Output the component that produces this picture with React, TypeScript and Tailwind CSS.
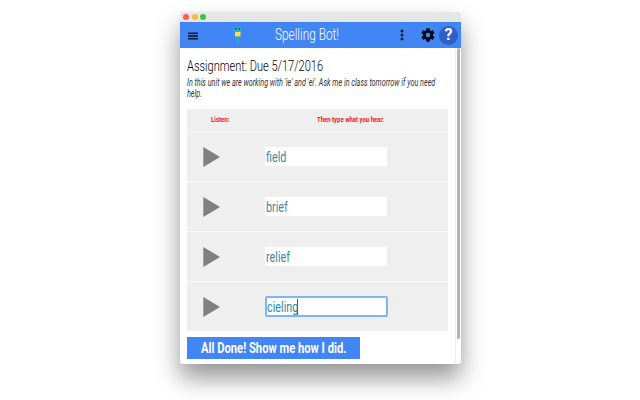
import React from "react";

const words = ["field", "brief", "relief", "cieling"];

function Row({ word, focus }: { word: string; focus?: boolean }) {
  return (
    <div className="flex h-[50px] items-center border-t border-[#f8f8f8]">
      <div className="flex w-[78px] shrink-0 pl-[16px]">
        <svg width="17" height="20" viewBox="0 0 17 20">
          <polygon points="0.3,0 17,10 0.3,20" fill="#808080" />
        </svg>
      </div>
      {focus ? (
        <div className="flex h-[21px] w-[123px] items-center rounded-[2px] border-2 border-[#7fb5f5] bg-white pt-[1px] text-[15px] text-[#2b8ba5]">
          <span className="inline-block origin-left scale-x-[0.72] leading-[17px]">{word}</span>
          <span className="ml-[-13px] h-[16px] w-px bg-[#555]" />
        </div>
      ) : (
        <div className="flex h-[19px] w-[122px] items-center bg-white pl-[1px] pt-[1px] text-[15px] text-[#3c8ba5]">
          <span className="inline-block origin-left scale-x-[0.72]">{word}</span>
        </div>
      )}
    </div>
  );
}

export default function App() {
  return (
    <div
      className="flex h-[400px] w-[640px] justify-center overflow-hidden bg-white pt-[12px] pl-[1px]"
      style={{ fontFamily: "Roboto, sans-serif" }}
    >
      <div className="flex h-[352px] w-[281px] flex-col overflow-hidden rounded-[3px] bg-white shadow-[0_14px_24px_rgba(0,0,0,0.42)]">
        <div className="flex h-[10px] shrink-0 items-center gap-[2.5px] bg-[#e6e6e6] pl-[3px]">
          <span className="h-[6px] w-[6px] rounded-full bg-[#fc5b57]" />
          <span className="h-[6px] w-[6px] rounded-full bg-[#fdbc40]" />
          <span className="h-[6px] w-[6px] rounded-full bg-[#34c84a]" />
        </div>
        <div className="flex h-[26px] shrink-0 items-center bg-[#4285f4]">
          <svg className="ml-[8px] mt-[2px]" width="10" height="8" viewBox="0 0 10 8">
            <rect x="0" y="0.5" width="10" height="1.6" fill="#0b1a33" />
            <rect x="0" y="3.2" width="10" height="1.6" fill="#0b1a33" />
            <rect x="0" y="5.9" width="10" height="1.6" fill="#0b1a33" />
          </svg>
          <svg className="ml-[35px] shrink-0" width="10" height="16" viewBox="0 0 10 16">
            <rect x="1" y="0" width="7" height="5" fill="#1bb5c9" />
            <rect x="2" y="1" width="1.5" height="1.5" fill="#143" />
            <rect x="5.5" y="1" width="1.5" height="1.5" fill="#143" />
            <rect x="2" y="5" width="5.5" height="4.5" fill="#f6e63c" />
            <rect x="3.5" y="9.5" width="2" height="5" fill="#1bb5c9" />
            <rect x="2.5" y="14" width="4" height="1.5" fill="#1bb5c9" />
          </svg>
          <div className="ml-[32px] w-[64px] shrink-0 whitespace-nowrap text-[16px] font-light text-white">
            <span className="inline-block origin-left scale-x-[0.74]">Spelling Bot!</span>
          </div>
          <svg className="ml-[61px] shrink-0" width="4" height="12" viewBox="0 0 4 12">
            <circle cx="2" cy="2" r="1.5" fill="#0b1a33" />
            <circle cx="2" cy="6" r="1.5" fill="#0b1a33" />
            <circle cx="2" cy="10" r="1.5" fill="#0b1a33" />
          </svg>
          <svg className="ml-[16px] shrink-0" width="16" height="16" viewBox="0 0 24 24">
            <path
              fill="#050a14"
              d="M19.43 12.98c.04-.32.07-.64.07-.98s-.03-.66-.07-.98l2.11-1.65c.19-.15.24-.42.12-.64l-2-3.46c-.12-.22-.39-.3-.61-.22l-2.49 1c-.52-.4-1.08-.73-1.69-.98l-.38-2.65A.49.49 0 0 0 14 2h-4c-.25 0-.46.18-.49.42l-.38 2.65c-.61.25-1.17.59-1.69.98l-2.49-1c-.23-.09-.49 0-.61.22l-2 3.46c-.13.22-.07.49.12.64l2.11 1.65c-.04.32-.07.65-.07.98s.03.66.07.98l-2.11 1.65c-.19.15-.24.42-.12.64l2 3.46c.12.22.39.3.61.22l2.49-1c.52.4 1.08.73 1.69.98l.38 2.65c.03.24.24.42.49.42h4c.25 0 .46-.18.49-.42l.38-2.65c.61-.25 1.17-.59 1.69-.98l2.49 1c.23.09.49 0 .61-.22l2-3.46c.12-.22.07-.49-.12-.64l-2.11-1.65zM12 15.5A3.5 3.5 0 1 1 12 8.5a3.5 3.5 0 0 1 0 7z"
            />
          </svg>
          <div className="ml-[3px] flex h-[19px] w-[19px] shrink-0 items-center justify-center rounded-full bg-[#2f5fc7] text-[16px] font-bold leading-none text-white">
            ?
          </div>
        </div>
        <div className="flex min-h-0 flex-1">
          <div className="flex min-w-0 flex-1 flex-col pl-[7px] pr-[7px]">
            <div className="mt-[9px] h-[18px] whitespace-nowrap text-[15px] font-light leading-[18px] text-black">
              <span className="inline-block origin-left scale-x-[0.735]">Assignment: Due 5/17/2016</span>
            </div>
            <p className="mt-[2px] w-[358px] origin-left scale-x-[0.72] text-[10px] italic leading-[11px] text-[#333]">
              In this unit we are working with 'ie' and 'ei'. Ask me in class tomorrow if you need help.
            </p>
            <div className="mt-[10px] bg-[#efefef]">
              <div className="flex h-[22px] items-center whitespace-nowrap text-[8px] font-bold text-[#f5141c]">
                <span className="ml-[24px] inline-block w-[54px] origin-left scale-x-[0.76]">Listen:</span>
                <span className="ml-[52px] inline-block origin-left scale-x-[0.745]">Then type what you hear:</span>
              </div>
              {words.map((w, i) => (
                <Row key={w} word={w} focus={i === 3} />
              ))}
            </div>
            <button className="mt-[6px] flex h-[22px] w-[173px] shrink-0 items-center overflow-hidden whitespace-nowrap bg-[#4285f4] pl-[14px] text-[14px] font-bold text-white">
              <span className="inline-block origin-left scale-x-[0.8]">All Done! Show me how I did.</span>
            </button>
          </div>
          <div className="flex w-[6px] shrink-0 border-l border-[#eee] pl-[1px]">
            <div className="h-[291px] w-[3px] rounded-full bg-[#b4b4b4]" />
          </div>
        </div>
      </div>
    </div>
  );
}
